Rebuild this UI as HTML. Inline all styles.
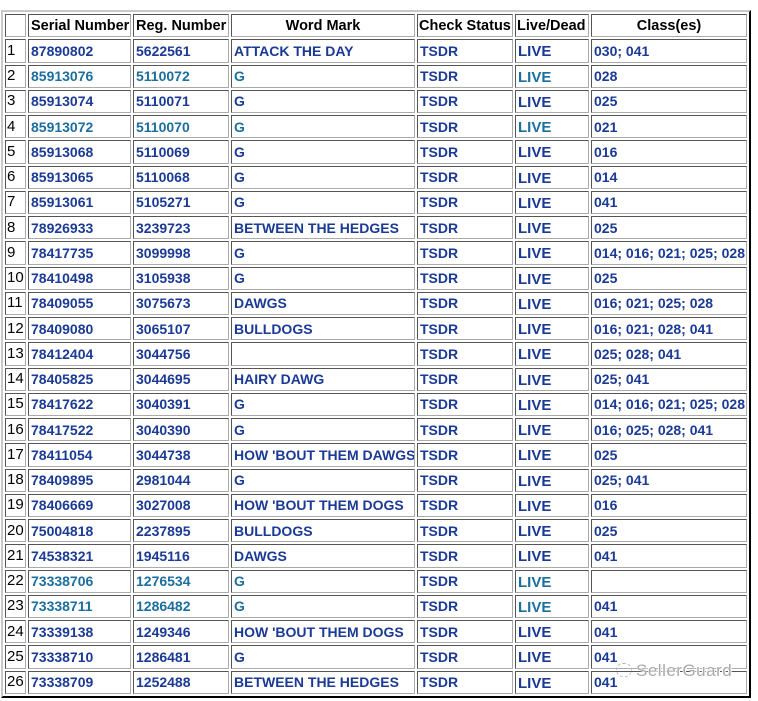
<!DOCTYPE html>
<html><head><meta charset="utf-8"><style>
body{margin:0;background:#fff;width:758px;height:701px;overflow:hidden;position:relative;font-family:"Liberation Sans",Arial,sans-serif;}
table{position:absolute;left:1px;top:10px;width:750px;height:688px;border:2px outset #ccc;border-color:#c8c8c8 #555 #555 #c8c8c8;border-spacing:2px;table-layout:fixed;border-collapse:separate}
td,th{border:1px solid;border-color:#555 #aaa #aaa #555;padding:0 0 0 2px;height:20px;font-size:14px;font-weight:bold;color:#1a3a95;white-space:nowrap;overflow:hidden;text-align:left;line-height:16px;vertical-align:middle}
th{color:#000;font-size:14.5px;height:20px;text-align:center;padding:0}
td.n{color:#000;font-weight:normal;font-size:15px;padding-left:1px}
td.l{font-size:15px;font-weight:900;padding-top:3px;height:17px}
tr.t td{color:#1b6e9e}
tr.t td.n{color:#000}
tr.t td.c,tr.t td.k{color:#1a3a95}
.wm{position:absolute;left:616px;top:661px;font-size:17px;color:#aaa;text-shadow:0 0 1px #fff,1px 1px 0 #fff,-1px -1px 0 #fff;letter-spacing:0.5px}
.wm span{display:inline-block;width:14px;height:12px;border:1px dashed #bbb;border-radius:7px;margin-right:4px;vertical-align:-1px}
</style></head><body>
<table>
<colgroup><col style="width:21px"><col style="width:103px"><col style="width:96px"><col style="width:184px"><col style="width:96px"><col style="width:74px"><col></colgroup>
<tr><th></th><th style="text-align:left;padding-left:2px">Serial Number</th><th style="text-align:left;padding-left:2px">Reg. Number</th><th>Word Mark</th><th style="text-align:left;padding-left:1px">Check Status</th><th style="text-align:left;padding-left:1px">Live/Dead</th><th>Class(es)</th></tr>
<tr><td class="n">1</td><td>87890802</td><td>5622561</td><td>ATTACK THE DAY</td><td class="k">TSDR</td><td class="l">LIVE</td><td class="c">030; 041</td></tr>
<tr class="t"><td class="n">2</td><td>85913076</td><td>5110072</td><td>G</td><td class="k">TSDR</td><td class="l">LIVE</td><td class="c">028</td></tr>
<tr><td class="n">3</td><td>85913074</td><td>5110071</td><td>G</td><td class="k">TSDR</td><td class="l">LIVE</td><td class="c">025</td></tr>
<tr class="t"><td class="n">4</td><td>85913072</td><td>5110070</td><td>G</td><td class="k">TSDR</td><td class="l">LIVE</td><td class="c">021</td></tr>
<tr><td class="n">5</td><td>85913068</td><td>5110069</td><td>G</td><td class="k">TSDR</td><td class="l">LIVE</td><td class="c">016</td></tr>
<tr><td class="n">6</td><td>85913065</td><td>5110068</td><td>G</td><td class="k">TSDR</td><td class="l">LIVE</td><td class="c">014</td></tr>
<tr><td class="n">7</td><td>85913061</td><td>5105271</td><td>G</td><td class="k">TSDR</td><td class="l">LIVE</td><td class="c">041</td></tr>
<tr><td class="n">8</td><td>78926933</td><td>3239723</td><td>BETWEEN THE HEDGES</td><td class="k">TSDR</td><td class="l">LIVE</td><td class="c">025</td></tr>
<tr><td class="n">9</td><td>78417735</td><td>3099998</td><td>G</td><td class="k">TSDR</td><td class="l">LIVE</td><td class="c">014; 016; 021; 025; 028</td></tr>
<tr><td class="n">10</td><td>78410498</td><td>3105938</td><td>G</td><td class="k">TSDR</td><td class="l">LIVE</td><td class="c">025</td></tr>
<tr><td class="n">11</td><td>78409055</td><td>3075673</td><td>DAWGS</td><td class="k">TSDR</td><td class="l">LIVE</td><td class="c">016; 021; 025; 028</td></tr>
<tr><td class="n">12</td><td>78409080</td><td>3065107</td><td>BULLDOGS</td><td class="k">TSDR</td><td class="l">LIVE</td><td class="c">016; 021; 028; 041</td></tr>
<tr><td class="n">13</td><td>78412404</td><td>3044756</td><td></td><td class="k">TSDR</td><td class="l">LIVE</td><td class="c">025; 028; 041</td></tr>
<tr><td class="n">14</td><td>78405825</td><td>3044695</td><td>HAIRY DAWG</td><td class="k">TSDR</td><td class="l">LIVE</td><td class="c">025; 041</td></tr>
<tr><td class="n">15</td><td>78417622</td><td>3040391</td><td>G</td><td class="k">TSDR</td><td class="l">LIVE</td><td class="c">014; 016; 021; 025; 028</td></tr>
<tr><td class="n">16</td><td>78417522</td><td>3040390</td><td>G</td><td class="k">TSDR</td><td class="l">LIVE</td><td class="c">016; 025; 028; 041</td></tr>
<tr><td class="n">17</td><td>78411054</td><td>3044738</td><td>HOW 'BOUT THEM DAWGS</td><td class="k">TSDR</td><td class="l">LIVE</td><td class="c">025</td></tr>
<tr><td class="n">18</td><td>78409895</td><td>2981044</td><td>G</td><td class="k">TSDR</td><td class="l">LIVE</td><td class="c">025; 041</td></tr>
<tr><td class="n">19</td><td>78406669</td><td>3027008</td><td>HOW 'BOUT THEM DOGS</td><td class="k">TSDR</td><td class="l">LIVE</td><td class="c">016</td></tr>
<tr><td class="n">20</td><td>75004818</td><td>2237895</td><td>BULLDOGS</td><td class="k">TSDR</td><td class="l">LIVE</td><td class="c">025</td></tr>
<tr><td class="n">21</td><td>74538321</td><td>1945116</td><td>DAWGS</td><td class="k">TSDR</td><td class="l">LIVE</td><td class="c">041</td></tr>
<tr class="t"><td class="n">22</td><td>73338706</td><td>1276534</td><td>G</td><td class="k">TSDR</td><td class="l">LIVE</td><td class="c"></td></tr>
<tr class="t"><td class="n">23</td><td>73338711</td><td>1286482</td><td>G</td><td class="k">TSDR</td><td class="l">LIVE</td><td class="c">041</td></tr>
<tr><td class="n">24</td><td>73339138</td><td>1249346</td><td>HOW 'BOUT THEM DOGS</td><td class="k">TSDR</td><td class="l">LIVE</td><td class="c">041</td></tr>
<tr><td class="n">25</td><td>73338710</td><td>1286481</td><td>G</td><td class="k">TSDR</td><td class="l">LIVE</td><td class="c">041</td></tr>
<tr><td class="n">26</td><td>73338709</td><td>1252488</td><td>BETWEEN THE HEDGES</td><td class="k">TSDR</td><td class="l">LIVE</td><td class="c">041</td></tr>
</table>
<div class="wm"><span></span>SellerGuard</div>
</body></html>
